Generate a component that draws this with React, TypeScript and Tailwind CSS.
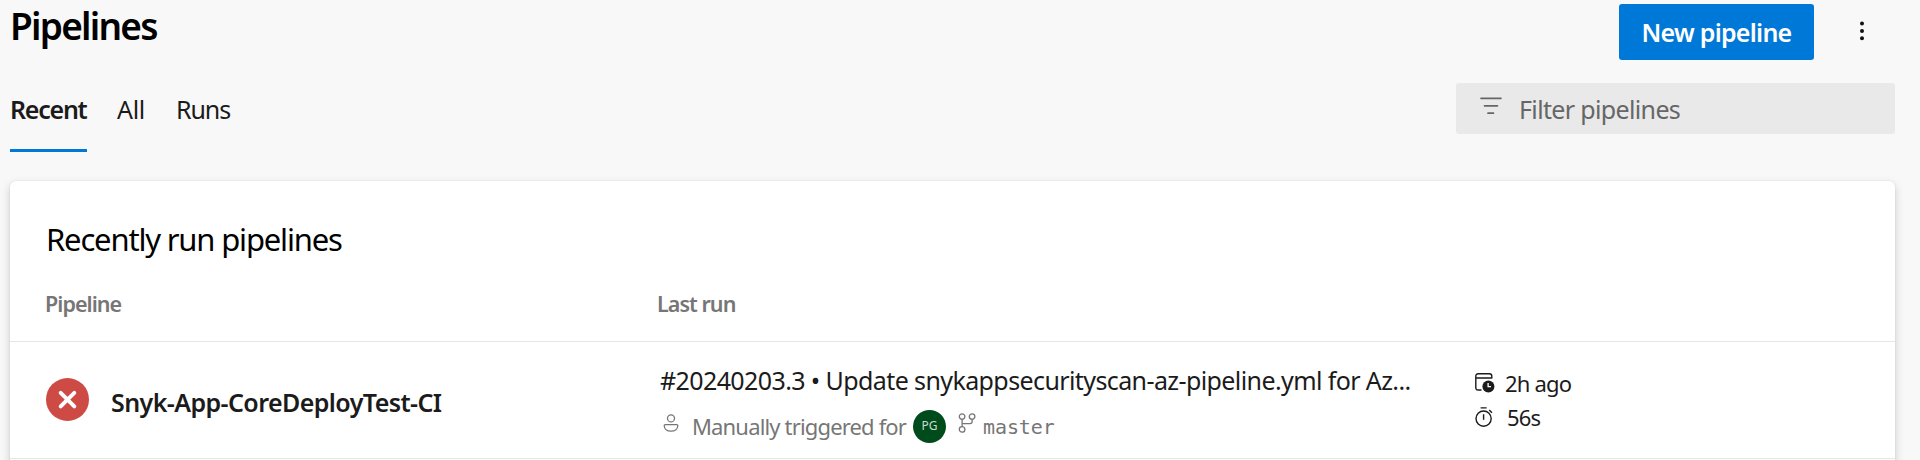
import React from "react";

function FilterIcon() {
  return (
    <svg width="22" height="18" viewBox="0 0 22 18" fill="none" stroke="#666" strokeWidth="1.7" strokeLinecap="round">
      <path d="M1 1.3H21M4.5 8.8H17.5M8 16.2H13.5" />
    </svg>
  );
}

function MoreIcon() {
  return (
    <svg width="6" height="20" viewBox="0 0 6 20" fill="#111">
      <circle cx="3" cy="2.5" r="2" />
      <circle cx="3" cy="10" r="2" />
      <circle cx="3" cy="17.3" r="2" />
    </svg>
  );
}

function FailedIcon() {
  return (
    <svg width="43" height="43" viewBox="0 0 43 43" fill="none">
      <circle cx="21.5" cy="21.5" r="21.5" fill="#cd4a45" />
      <path d="M14.7 14.8L28.3 28.3M28.3 14.8L14.7 28.3" stroke="#fff" strokeWidth="4" strokeLinecap="round" />
    </svg>
  );
}

function PersonIcon() {
  return (
    <svg width="16" height="18" viewBox="0 0 16 18" fill="none" stroke="#767676" strokeWidth="1.3">
      <circle cx="8" cy="4.4" r="3.5" />
      <path d="M2.3 10.6H13.7Q14.8 10.6 14.8 11.6C14.8 15 12 17.2 8 17.2S1.2 15 1.2 11.6Q1.2 10.6 2.3 10.6Z" />
    </svg>
  );
}

function BranchIcon() {
  return (
    <svg width="18" height="20" viewBox="0 0 18 20" fill="none" stroke="#767676" strokeWidth="1.3">
      <circle cx="4.1" cy="3.6" r="2.8" />
      <circle cx="14.1" cy="3.6" r="2.8" />
      <circle cx="4.1" cy="16.4" r="2.8" />
      <path d="M4.1 6.4V13.6M14.1 6.4V8.6Q14.1 10.6 12.1 10.6H4.1" />
    </svg>
  );
}

function CalendarClockIcon() {
  return (
    <svg width="20" height="20" viewBox="0 0 20 20" fill="none" stroke="#1b1b1b" strokeWidth="1.4">
      <path d="M6.5 17H3.2Q.8 17 .8 14.6V3.2Q.8 .8 3.2 .8H14.4Q16.8 .8 16.8 3.2V5.6M.8 5H16.8" />
      <circle cx="13.4" cy="13.4" r="6" fill="#1b1b1b" stroke="none" />
      <path d="M13.1 9.9V13.6H16" stroke="#fff" strokeWidth="1.3" />
    </svg>
  );
}

function TimerIcon() {
  return (
    <svg width="18" height="20" viewBox="0 0 18 20" fill="none" stroke="#1b1b1b" strokeWidth="1.4">
      <circle cx="8.6" cy="11.6" r="7.6" />
      <path d="M8.6 7.2V12.8M5.6 .9H11.6M14.2 3L17 5.7" />
    </svg>
  );
}

export default function App() {
  return (
    <div className="h-[460px] w-full overflow-hidden bg-[#f8f8f8] pl-2.5 pr-[25px] font-['Noto_Sans','Open_Sans',sans-serif] text-[#1b1b1b]">
      <header className="flex h-[83px] items-start justify-between pt-1">
        <h1 className="whitespace-nowrap text-[37px] leading-[44px] font-semibold tracking-[-1.75px] text-black">Pipelines</h1>
        <div className="flex items-start">
          <button className="flex h-14 w-[195px] items-center justify-center rounded-[3px] bg-[#0078d7] pt-px text-[25px] font-semibold tracking-[-0.75px] whitespace-nowrap text-white">
            New pipeline
          </button>
          <button className="mt-[17px] mr-[30px] ml-[45px]">
            <MoreIcon />
          </button>
        </div>
      </header>

      <div className="flex h-[98px] items-start justify-between">
        <nav className="flex text-[25px] leading-[53px] whitespace-nowrap">
          <a className="h-[69px] w-[77px] border-b-3 border-[#0078d7] font-semibold tracking-[-1.25px]">Recent</a>
          <a className="ml-[30px] w-[29px] tracking-[-0.3px]">All</a>
          <a className="ml-[30px] tracking-[-1.1px]">Runs</a>
        </nav>
        <div className="flex h-[51px] w-[439px] items-center rounded-[3px] bg-[#e9e9e9] pl-6 text-[25px] tracking-[-0.65px] text-[#666]">
          <div className="-mt-[6px]">
            <FilterIcon />
          </div>
          <span className="mt-[3px] ml-[17px] whitespace-nowrap">Filter pipelines</span>
        </div>
      </div>

      <main className="h-[300px] rounded-t-[6px] bg-white shadow-[0_4px_10px_rgba(0,0,0,0.18),0_0_2px_rgba(0,0,0,0.1)]">
        <h2 className="h-[91px] pt-9 pl-9 text-[31px] leading-[45px] tracking-[-1.18px] whitespace-nowrap text-black">
          Recently run pipelines
        </h2>
        <div className="flex h-[70px] border-b border-[#e6e6e6] pl-[35px] text-[21.5px] leading-[64px] font-semibold tracking-[-0.95px] text-[#767676]">
          <div className="w-[612px]">Pipeline</div>
          <div>Last run</div>
        </div>
        <div className="flex h-[117px] border-b border-[#e6e6e6] pl-9">
          <div className="flex w-[614px] items-start pt-9">
            <FailedIcon />
            <span className="ml-[22px] text-[25px] leading-[48px] font-semibold tracking-[-0.58px] whitespace-nowrap">
              Snyk-App-CoreDeployTest-CI
            </span>
          </div>
          <div className="w-[815px] pt-5">
            <div className="h-9 text-[25px] leading-[37px] tracking-[-0.6px] whitespace-nowrap">
              #20240203.3 • Update snykappsecurityscan-az-pipeline.yml for Az...
            </div>
            <div className="mt-[10px] flex h-9 items-center pl-[3px] text-[22px] tracking-[-0.84px] whitespace-nowrap text-[#767676]">
              <div className="-mt-[6px]">
                <PersonIcon />
              </div>
              <span className="ml-[13px] w-[215px]">Manually triggered for</span>
              <span className="ml-[6px] flex size-[33px] items-center justify-center rounded-full bg-[#004b1c] text-[12px] tracking-normal text-[#c8dccd]">
                PG
              </span>
              <div className="-mt-[6px] ml-3">
                <BranchIcon />
              </div>
              <span className="mt-px ml-[7px] font-['DejaVu_Sans_Mono',monospace] text-[20px] tracking-[-0.1px]">master</span>
            </div>
          </div>
          <div className="pt-6 text-[22px] tracking-[-0.8px] whitespace-nowrap">
            <div className="flex h-[34px] items-center">
              <CalendarClockIcon />
              <span className="ml-[10px]">2h ago</span>
            </div>
            <div className="flex h-[33px] items-center">
              <TimerIcon />
              <span className="mt-px ml-[14px]">56s</span>
            </div>
          </div>
        </div>
      </main>
    </div>
  );
}
